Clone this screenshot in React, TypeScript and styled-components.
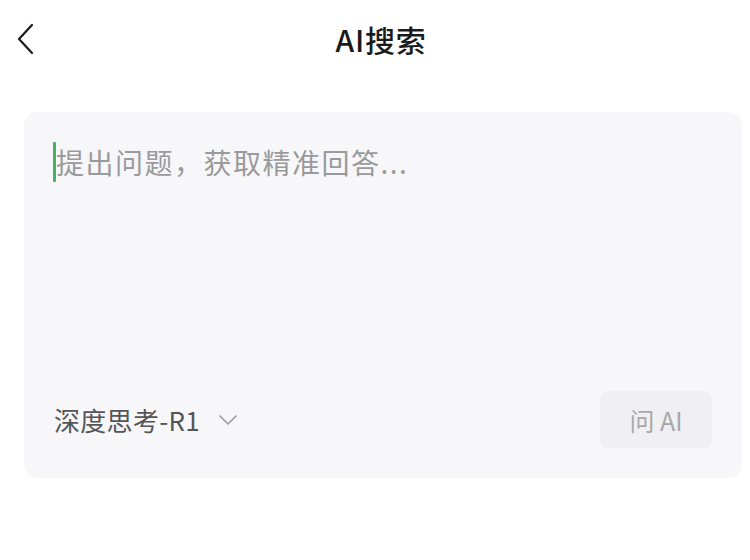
import React from "react";
import styled, { createGlobalStyle } from "styled-components";

const GlobalStyle = createGlobalStyle`
  html, body { margin: 0; padding: 0; background: #ffffff; }
  body { font-family: "Noto Sans CJK SC", "Noto Sans", sans-serif; width: 750px; height: 560px; overflow: hidden; }
`;

const Page = styled.div`
  width: 750px;
  height: 560px;
  display: flex;
  flex-direction: column;
  background: #ffffff;
`;

const Header = styled.div`
  height: 80px;
  display: grid;
  grid-template-columns: 80px 1fr 80px;
  align-items: center;
`;

const BackButton = styled.div`
  padding-left: 16px;
  display: flex;
  align-items: center;
  height: 80px;
  margin-top: -2px;
`;

const Title = styled.div`
  text-align: center;
  font-size: 30px;
  font-weight: 500;
  color: #1a1a1a;
  padding-left: 12px;
  margin-top: -2px;
  letter-spacing: 0.8px;
`;

const Card = styled.div`
  margin: 32px 8px 0 24px;
  height: 366px;
  background: #f7f7f9;
  border-radius: 14px;
  display: flex;
  flex-direction: column;
  justify-content: space-between;
  padding: 30px 30px 30px 29px;
  box-sizing: border-box;
`;

const InputRow = styled.div`
  display: flex;
  align-items: center;
  height: 40px;
`;

const Caret = styled.span`
  width: 3px;
  height: 40px;
  background: #45b260;
  border-radius: 1px;
`;

const Placeholder = styled.span`
  font-size: 28px;
  color: #9a9a9c;
  letter-spacing: 1.5px;
`;

const Footer = styled.div`
  display: flex;
  align-items: center;
  justify-content: space-between;
`;

const ModelSelect = styled.div`
  display: flex;
  align-items: center;
  gap: 18px;
  font-size: 26px;
  color: #555557;
  padding-left: 1px;
  letter-spacing: 0.3px;
`;

const AskButton = styled.div`
  width: 112px;
  height: 57px;
  border-radius: 8px;
  background: #f0f0f2;
  color: #a8a8aa;
  font-size: 25px;
  display: flex;
  align-items: center;
  justify-content: center;
`;

export default function App() {
  return (
    <>
      <GlobalStyle />
      <Page>
        <Header>
          <BackButton>
            <svg width="20" height="34" viewBox="0 0 20 34">
              <path d="M16 3 L3 17 L16 31" fill="none" stroke="#1a1a1a" strokeWidth="2.2" strokeLinecap="round" strokeLinejoin="round" />
            </svg>
          </BackButton>
          <Title>AI搜索</Title>
          <div />
        </Header>
        <Card>
          <InputRow>
            <Caret />
            <Placeholder>提出问题，获取精准回答...</Placeholder>
          </InputRow>
          <Footer>
            <ModelSelect>
              <span>深度思考-R1</span>
              <svg width="20" height="12" viewBox="0 0 20 12">
                <path d="M2 2 L10 10 L18 2" fill="none" stroke="#9a9a9c" strokeWidth="1.6" strokeLinecap="round" strokeLinejoin="round" />
              </svg>
            </ModelSelect>
            <AskButton>问 AI</AskButton>
          </Footer>
        </Card>
      </Page>
    </>
  );
}
